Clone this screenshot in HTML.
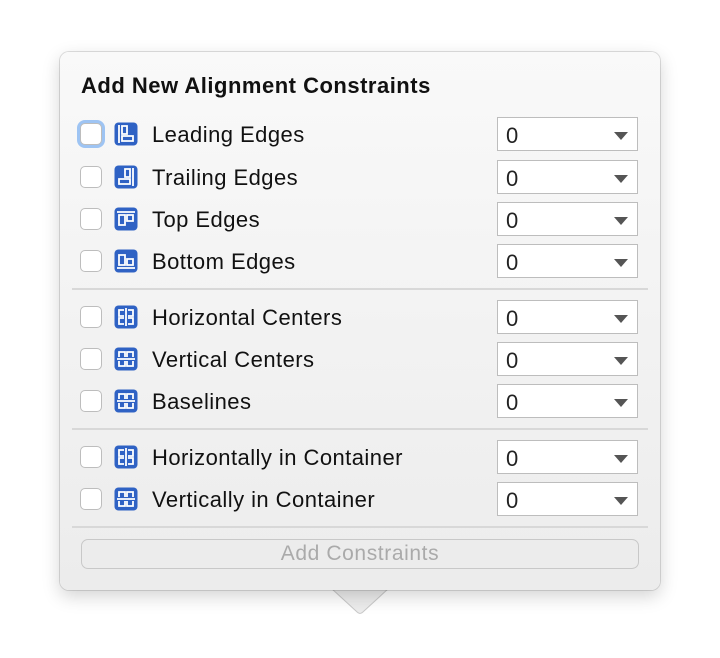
<!DOCTYPE html><html><head><style>
body{margin:0;width:720px;height:658px;background:#fff;font-family:"Liberation Sans",sans-serif;position:relative;overflow:hidden}
.pop{position:absolute;left:60px;top:52px;width:600px;height:538px;border-radius:9px;background:linear-gradient(#f9f9f9,#ececec);box-shadow:0 0 0 1px rgba(0,0,0,.12),0 6px 18px rgba(0,0,0,.18)}
.arrow{position:absolute;left:326px;top:586px}
h1{position:absolute;left:81px;top:73px;margin:0;font-size:22px;font-weight:bold;color:#111;letter-spacing:0.5px}
.row{position:absolute;left:0;width:720px;height:34px}
.cb{position:absolute;left:80px;top:6px;width:22px;height:22px;border:1px solid #bdbdbd;border-radius:5px;background:#fff;box-sizing:border-box}
.cb.f{box-shadow:0 0 0 3px #9ec4f3}
.ic{position:absolute;left:114px;top:5px}
.lb{position:absolute;left:152px;top:5px;font-size:22px;color:#111;letter-spacing:0.45px}
.dd{position:absolute;left:497px;top:0;width:141px;height:34px;box-sizing:border-box;border:1px solid #bdbdbd;background:#fff}
.dd span{position:absolute;left:8px;top:5px;font-size:22px;color:#222}
.dd i{position:absolute;right:9px;top:14px;border-left:7px solid transparent;border-right:7px solid transparent;border-top:8px solid #555}
.sep{position:absolute;left:72px;width:576px;height:2px;background:#d8d8d8}
.btn{position:absolute;left:81px;top:539px;width:558px;height:30px;box-sizing:border-box;border:1px solid #c8c8c8;border-radius:7px;background:#ececec;text-align:center;line-height:28px;font-size:21px;color:#aaa;letter-spacing:0.6px}
</style></head><body>
<svg class="arrow" width="68" height="34"><path d="M6 3L31 26Q34 29 37 26L62 3" fill="#ececec" stroke="rgba(0,0,0,.18)" stroke-width="1"/><rect x="0" y="0" width="68" height="3.5" fill="#ececec"/></svg>
<div class="pop"></div>
<h1>Add New Alignment Constraints</h1>

<div class="row" style="top:117px"><div class="cb f"></div><svg class="ic" width="24" height="24"><rect x=".5" y=".5" width="23" height="23" rx="4" fill="#2f62c4"/><path d="M5 3v18M8 4h5v8H8zM8 14h11v5H8z" stroke="#fff" stroke-width="1.8" fill="none"/></svg><div class="lb">Leading Edges</div><div class="dd"><span>0</span><i></i></div></div>
<div class="row" style="top:160px"><div class="cb"></div><svg class="ic" width="24" height="24"><rect x=".5" y=".5" width="23" height="23" rx="4" fill="#2f62c4"/><path d="M19 3v18M11 4h5v8h-5zM5 14h11v5H5z" stroke="#fff" stroke-width="1.8" fill="none"/></svg><div class="lb">Trailing Edges</div><div class="dd"><span>0</span><i></i></div></div>
<div class="row" style="top:202px"><div class="cb"></div><svg class="ic" width="24" height="24"><rect x=".5" y=".5" width="23" height="23" rx="4" fill="#2f62c4"/><path d="M3 5h18M5 8h6v10H5zM13 8h6v6h-6z" stroke="#fff" stroke-width="1.8" fill="none"/></svg><div class="lb">Top Edges</div><div class="dd"><span>0</span><i></i></div></div>
<div class="row" style="top:244px"><div class="cb"></div><svg class="ic" width="24" height="24"><rect x=".5" y=".5" width="23" height="23" rx="4" fill="#2f62c4"/><path d="M3 19h18M5 6h6v10H5zM13 10h6v6h-6z" stroke="#fff" stroke-width="1.8" fill="none"/></svg><div class="lb">Bottom Edges</div><div class="dd"><span>0</span><i></i></div></div>
<div class="sep" style="top:288px"></div>
<div class="row" style="top:300px"><div class="cb"></div><svg class="ic" width="24" height="24"><rect x=".5" y=".5" width="23" height="23" rx="4" fill="#2f62c4"/><path d="M12 3v18M10 5H5v6h5M10 13H5v6h5M14 5h5v6h-5M14 13h5v6h-5" stroke="#fff" stroke-width="1.8" fill="none"/></svg><div class="lb">Horizontal Centers</div><div class="dd"><span>0</span><i></i></div></div>
<div class="row" style="top:342px"><div class="cb"></div><svg class="ic" width="24" height="24"><rect x=".5" y=".5" width="23" height="23" rx="4" fill="#2f62c4"/><path d="M3 12h18M5 10V5h6v5M13 10V5h6v5M5 14v5h6v-5M13 14v5h6v-5" stroke="#fff" stroke-width="1.8" fill="none"/></svg><div class="lb">Vertical Centers</div><div class="dd"><span>0</span><i></i></div></div>
<div class="row" style="top:384px"><div class="cb"></div><svg class="ic" width="24" height="24"><rect x=".5" y=".5" width="23" height="23" rx="4" fill="#2f62c4"/><path d="M3 12h18M5 10V5h6v5M13 10V5h6v5M5 14v5h6v-5M13 14v5h6v-5" stroke="#fff" stroke-width="1.8" fill="none"/></svg><div class="lb">Baselines</div><div class="dd"><span>0</span><i></i></div></div>
<div class="sep" style="top:428px"></div>
<div class="row" style="top:440px"><div class="cb"></div><svg class="ic" width="24" height="24"><rect x=".5" y=".5" width="23" height="23" rx="4" fill="#2f62c4"/><path d="M12 3v18M10 5H5v6h5M10 13H5v6h5M14 5h5v6h-5M14 13h5v6h-5" stroke="#fff" stroke-width="1.8" fill="none"/></svg><div class="lb">Horizontally in Container</div><div class="dd"><span>0</span><i></i></div></div>
<div class="row" style="top:482px"><div class="cb"></div><svg class="ic" width="24" height="24"><rect x=".5" y=".5" width="23" height="23" rx="4" fill="#2f62c4"/><path d="M3 12h18M5 10V5h6v5M13 10V5h6v5M5 14v5h6v-5M13 14v5h6v-5" stroke="#fff" stroke-width="1.8" fill="none"/></svg><div class="lb">Vertically in Container</div><div class="dd"><span>0</span><i></i></div></div>
<div class="sep" style="top:526px"></div>
<div class="btn">Add Constraints</div>
</body></html>
